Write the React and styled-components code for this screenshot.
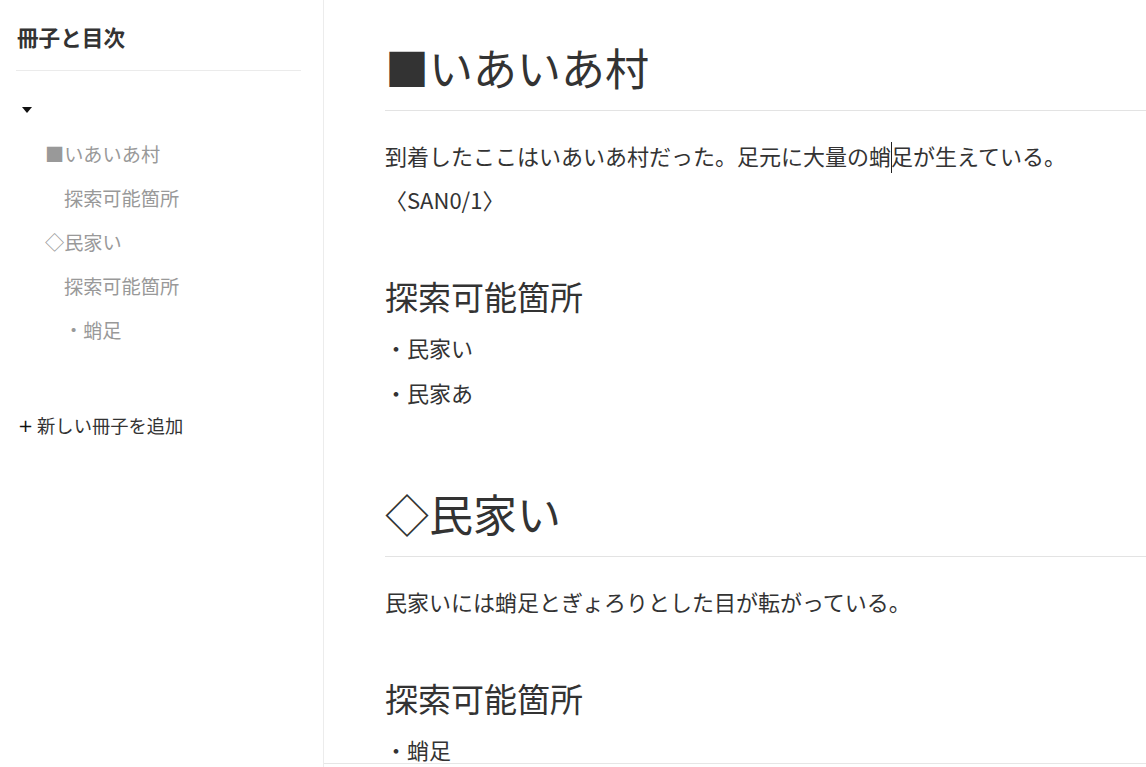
import React from 'react';
import styled, {createGlobalStyle} from 'styled-components';

const GlobalStyle = createGlobalStyle`
  html, body {
    margin: 0;
    padding: 0;
    background: #fff;
  }
  body {
    font-family: "Noto Sans CJK JP", "Noto Sans", sans-serif;
    color: #333;
  }
`;

const Shell = styled.div`
  display: flex;
  height: 100vh;
  overflow: hidden;
`;

const Sidebar = styled.aside`
  width: 324px;
  flex-shrink: 0;
  box-sizing: border-box;
  padding: 0 22px 0 16px;
  border-right: 1px solid #ececec;
`;

const SideTitle = styled.div`
  padding: 22px 0 18px 1px;
  font-size: 21.6px;
  line-height: 30px;
  font-weight: 700;
  color: #333;
  border-bottom: 1px solid #ebebeb;
`;

const Tree = styled.div`
  margin-top: 17px;
  display: flex;
  flex-direction: column;
`;

const Toggle = styled.div`
  height: 44px;
  display: flex;
  align-items: center;
  padding-left: 6px;
`;

const Caret = styled.span`
  width: 0;
  height: 0;
  border-left: 5px solid transparent;
  border-right: 5px solid transparent;
  border-top: 6px solid #111;
`;

const TreeItem = styled.div`
  height: 44px;
  line-height: 44px;
  padding-left: ${(props) => props.$indent}px;
  font-size: 19.2px;
  color: #999;
  white-space: nowrap;
`;

const AddBook = styled.div`
  margin-top: 51px;
  height: 44px;
  display: flex;
  align-items: center;
  gap: 4px;
  padding-left: 2px;
  font-size: 18.3px;
  color: #333;
`;

const Plus = styled.span`
  font-size: 18px;
  color: #111;
  font-family: "DejaVu Sans", sans-serif;
`;

const Main = styled.main`
  flex: 1;
  height: 764px;
  box-sizing: border-box;
  padding: 38px 0 0 61px;
  border-bottom: 1px solid #e6e6e6;
  overflow: hidden;
`;

const Section = styled.section`
  margin-top: 69px;
  &:first-child {
    margin-top: 0;
  }
`;

const Heading = styled.h1`
  margin: 0;
  padding-bottom: 14px;
  font-size: 44px;
  line-height: 58px;
  font-weight: 400;
  color: #333;
  border-bottom: 1px solid #e3e3e3;
  white-space: nowrap;
`;

const Para = styled.p`
  margin: ${(props) => (props.$first ? '22px' : '0')} 0 0;
  font-size: 22px;
  line-height: 44px;
  white-space: nowrap;
`;

const TextCursor = styled.span`
  display: inline-block;
  width: 1px;
  height: 31px;
  margin-right: -1px;
  background: #222;
  vertical-align: -8px;
`;

const SubHeading = styled.h2`
  margin: 52px 0 0;
  font-size: 33px;
  line-height: 46px;
  font-weight: 400;
  white-space: nowrap;
`;

const List = styled.div`
  margin-top: 6px;
`;

const ListItem = styled.div`
  font-size: 22px;
  line-height: 45px;
`;

const sidebarItems = [
  {label: '■いあいあ村', indent: 29},
  {label: '探索可能箇所', indent: 48},
  {label: '◇民家い', indent: 29},
  {label: '探索可能箇所', indent: 48},
  {label: '・蛸足', indent: 48},
];

const App = () => {
  return (
    <>
      <GlobalStyle />
      <Shell>
        <Sidebar>
          <SideTitle>冊子と目次</SideTitle>
          <Tree>
            <Toggle><Caret /></Toggle>
            {sidebarItems.map((item, i) => (
              <TreeItem key={i} $indent={item.indent}>{item.label}</TreeItem>
            ))}
          </Tree>
          <AddBook><Plus>+</Plus>新しい冊子を追加</AddBook>
        </Sidebar>
        <Main>
          <Section>
            <Heading>■いあいあ村</Heading>
            <Para $first>到着したここはいあいあ村だった。足元に大量の蛸<TextCursor />足が生えている。</Para>
            <Para>〈SAN0/1〉</Para>
            <SubHeading>探索可能箇所</SubHeading>
            <List>
              <ListItem>・民家い</ListItem>
              <ListItem>・民家あ</ListItem>
            </List>
          </Section>
          <Section>
            <Heading>◇民家い</Heading>
            <Para $first>民家いには蛸足とぎょろりとした目が転がっている。</Para>
            <SubHeading>探索可能箇所</SubHeading>
            <List>
              <ListItem>・蛸足</ListItem>
            </List>
          </Section>
        </Main>
      </Shell>
    </>
  )
}

export default App;
